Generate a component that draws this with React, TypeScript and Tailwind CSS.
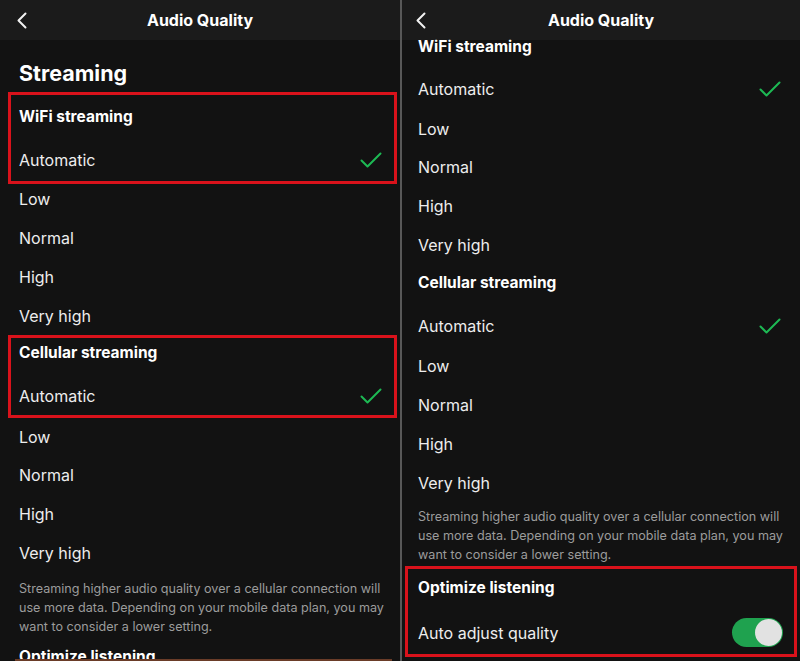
import React from "react";

const RED = "border-[#d9121b]";

function Chevron() {
  return (
    <svg width="11" height="17" viewBox="0 0 11 17" fill="none">
      <polyline points="9.5,1.5 2.5,8.5 9.5,15.5" stroke="#f2f2f2" strokeWidth="2" strokeLinecap="round" strokeLinejoin="round" />
    </svg>
  );
}

function Check() {
  return (
    <svg width="22" height="16" viewBox="0 0 22 16" fill="none">
      <polyline points="1.5,8.5 7.5,14.5 20.5,1.5" stroke="#1db954" strokeWidth="2" strokeLinecap="round" strokeLinejoin="round" />
    </svg>
  );
}

function Header({ pad }: { pad: string }) {
  return (
    <div className="grid h-[40px] shrink-0 grid-cols-[48px_1fr_48px] items-center bg-[#1b1b1b]">
      <div className={`flex items-center ${pad}`}>
        <Chevron />
      </div>
      <div className="text-center text-[16px] font-bold text-white">Audio Quality</div>
      <div />
    </div>
  );
}

function Row({ label, h, extra = "", check = false }: { label: string; h: string; extra?: string; check?: boolean }) {
  return (
    <div className={`flex items-center justify-between text-[16px] text-[#ededed] ${h} ${extra}`}>
      <span>{label}</span>
      {check && <Check />}
    </div>
  );
}

function Title({ label, h, extra = "" }: { label: string; h: string; extra?: string }) {
  return <div className={`flex items-center text-[15.5px] font-bold text-white ${h} ${extra}`}>{label}</div>;
}

function Desc({ extra }: { extra: string }) {
  return (
    <div className={`whitespace-nowrap text-[12.6px] leading-[19px] text-[#9c9c9c] ${extra}`}>
      <div>Streaming higher audio quality over a cellular connection will</div>
      <div>use more data. Depending on your mobile data plan, you may</div>
      <div>want to consider a lower setting.</div>
    </div>
  );
}

function Toggle() {
  return (
    <div className="flex h-[29px] w-[51px] items-center justify-end rounded-full bg-[#1fa24f] p-[1px]">
      <div className="h-[27px] w-[27px] rounded-full bg-[#e2e2e2]" />
    </div>
  );
}

function LeftPanel() {
  return (
    <div className="relative flex h-[661px] w-[400px] shrink-0 flex-col overflow-hidden bg-[#121212]">
      <Header pad="pl-[16px]" />
      <div className="pl-[19px] pt-[19px] pb-[5px] text-[21.5px] font-bold leading-[28px] text-white">Streaming</div>
      <div className={`ml-[8px] mr-[3px] border-[3px] ${RED} pl-[8px] pr-[12px]`}>
        <Title label="WiFi streaming" h="h-[43px]" extra="pt-[1px]" />
        <Row label="Automatic" h="h-[43px]" check />
      </div>
      <div className="pl-[19px] pr-[18px]">
        <Row label="Low" h="h-[34px]" extra="pb-[4px]" />
        <Row label="Normal" h="h-[39px]" />
        <Row label="High" h="h-[39px]" />
        <Row label="Very high" h="h-[39px]" />
      </div>
      <div className={`ml-[8px] mr-[3px] border-[3px] ${RED} pl-[8px] pr-[12px]`}>
        <Title label="Cellular streaming" h="h-[30px]" />
        <Row label="Automatic" h="h-[47px]" extra="pt-[9px]" check />
      </div>
      <div className="pl-[19px] pr-[18px]">
        <Row label="Low" h="h-[37px]" />
        <Row label="Normal" h="h-[39px]" />
        <Row label="High" h="h-[39px]" />
        <Row label="Very high" h="h-[39px]" />
        <Desc extra="pt-[7px]" />
        <Title label="Optimize listening" h="h-[20px]" extra="mt-[11px]" />
      </div>
      <div className="absolute bottom-0 left-[15px] right-[8px] h-[2px] bg-[#6a3c28]" />
    </div>
  );
}

function RightPanel() {
  return (
    <div className="flex h-[661px] flex-1 flex-col overflow-hidden bg-[#121212]">
      <Header pad="pl-[13px]" />
      <div className="pl-[16px] pr-[19px]">
        <div className="flex h-[27px] items-start text-[15.5px] font-bold leading-[14px] text-white">WiFi streaming</div>
        <Row label="Automatic" h="h-[44px]" check />
        <Row label="Low" h="h-[36px]" />
        <Row label="Normal" h="h-[39px]" />
        <Row label="High" h="h-[39px]" />
        <Row label="Very high" h="h-[39px]" />
        <Title label="Cellular streaming" h="h-[38px]" />
        <Row label="Automatic" h="h-[44px]" extra="pt-[4px]" check />
        <Row label="Low" h="h-[39px]" />
        <Row label="Normal" h="h-[39px]" />
        <Row label="High" h="h-[39px]" />
        <Row label="Very high" h="h-[39px]" />
        <Desc extra="pt-[5px]" />
      </div>
      <div className={`mx-[3px] mt-[2px] border-[3px] ${RED} pl-[10px] pr-[11px]`}>
        <Title label="Optimize listening" h="h-[37px]" />
        <div className="flex h-[48px] items-center justify-between pt-[5px] text-[16px] text-[#ededed]">
          <span>Auto adjust quality</span>
          <Toggle />
        </div>
      </div>
    </div>
  );
}

export default function App() {
  return (
    <div className="flex h-[661px] w-[800px] overflow-hidden bg-[#121212] font-['Inter',sans-serif] antialiased">
      <LeftPanel />
      <div className="w-[2px] shrink-0 bg-[#585858]" />
      <RightPanel />
    </div>
  );
}
